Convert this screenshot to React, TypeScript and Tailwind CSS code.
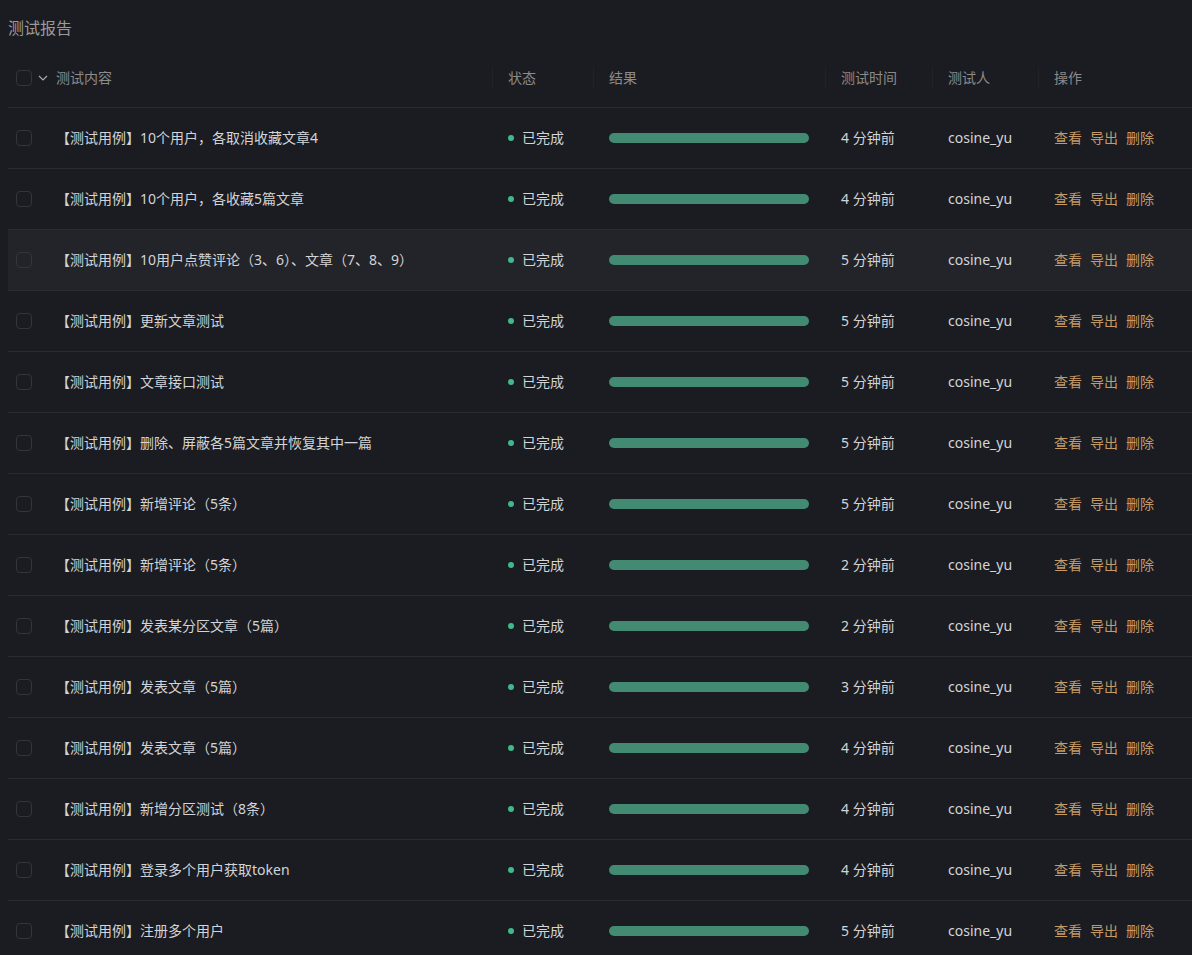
import React from "react";

const rows: { title: string; time: string; hover?: boolean }[] = [
  { title: "【测试用例】10个用户，各取消收藏文章4", time: "4 分钟前" },
  { title: "【测试用例】10个用户，各收藏5篇文章", time: "4 分钟前" },
  { title: "【测试用例】10用户点赞评论（3、6）、文章（7、8、9）", time: "5 分钟前", hover: true },
  { title: "【测试用例】更新文章测试", time: "5 分钟前" },
  { title: "【测试用例】文章接口测试", time: "5 分钟前" },
  { title: "【测试用例】删除、屏蔽各5篇文章并恢复其中一篇", time: "5 分钟前" },
  { title: "【测试用例】新增评论（5条）", time: "5 分钟前" },
  { title: "【测试用例】新增评论（5条）", time: "2 分钟前" },
  { title: "【测试用例】发表某分区文章（5篇）", time: "2 分钟前" },
  { title: "【测试用例】发表文章（5篇）", time: "3 分钟前" },
  { title: "【测试用例】发表文章（5篇）", time: "4 分钟前" },
  { title: "【测试用例】新增分区测试（8条）", time: "4 分钟前" },
  { title: "【测试用例】登录多个用户获取token", time: "4 分钟前" },
  { title: "【测试用例】注册多个用户", time: "5 分钟前" },
];

const grid = "grid grid-cols-[48px_436px_101px_232px_107px_106px_1fr] items-center";

function Checkbox() {
  return <div className="w-4 h-4 rounded-[4px] border border-[#34353b] bg-transparent" />;
}

function HeadCell({ children, sep = true }: { children: React.ReactNode; sep?: boolean }) {
  return (
    <div className="relative h-full flex items-center pl-4">
      {sep && <div className="absolute left-0 top-[18px] h-[22px] w-px bg-[#212227]" />}
      {children}
    </div>
  );
}

export default function App() {
  return (
    <div
      className="min-h-[955px] w-[1192px] overflow-hidden bg-[#1b1c21] pl-2"
      style={{ fontFamily: '"Noto Sans", "Noto Sans CJK SC", sans-serif' }}
    >
      <div className="pt-4 mb-[8px] text-base leading-6 text-[#9a9a9a]">测试报告</div>
      <div className="w-[1200px]">
        <div className={`${grid} h-[60px] border-b border-[#2a2b30] text-sm text-[#8b8b8b]`}>
          <div className="flex items-center h-full pl-2 gap-[6px]">
            <Checkbox />
            <svg width="10" height="10" viewBox="0 0 10 10" className="text-[#a8a8a8]">
              <path d="M1 3 L5 7 L9 3" fill="none" stroke="currentColor" strokeWidth="1.2" />
            </svg>
          </div>
          <div className="h-full flex items-center">测试内容</div>
          <HeadCell>状态</HeadCell>
          <HeadCell>结果</HeadCell>
          <HeadCell>测试时间</HeadCell>
          <HeadCell>测试人</HeadCell>
          <HeadCell>操作</HeadCell>
        </div>
        {rows.map((r, i) => (
          <div
            key={i}
            className={`${grid} h-[61px] border-b border-[#2a2b30] text-sm text-[#d2d4d8] ${
              r.hover ? "bg-[#232429]" : ""
            }`}
          >
            <div className="pl-2 flex items-center">
              <Checkbox />
            </div>
            <div className="whitespace-nowrap">{r.title}</div>
            <div className="pl-4 flex items-center gap-2">
              <span className="w-[6px] h-[6px] rounded-full bg-[#41b98b]" />
              <span>已完成</span>
            </div>
            <div className="pl-4 flex items-center">
              <div className="w-[200px] h-[10px] rounded-[5px] bg-[#428a72]" />
            </div>
            <div className="pl-4 whitespace-nowrap">{r.time}</div>
            <div className="pl-4">cosine_yu</div>
            <div className="pl-4 flex gap-2 text-[#c39a68]">
              <span>查看</span>
              <span>导出</span>
              <span>删除</span>
            </div>
          </div>
        ))}
      </div>
    </div>
  );
}
